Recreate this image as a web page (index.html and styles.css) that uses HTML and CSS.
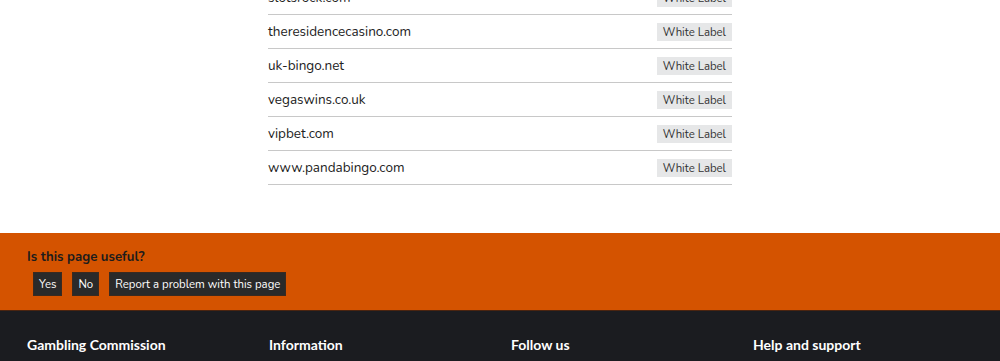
FILE: index.html
```html
<!DOCTYPE html>
<html lang="en">
<head>
    <meta charset="UTF-8">
    <meta name="viewport" content="width=device-width, initial-scale=1.0">
    <title>Operators</title>
    <link rel="stylesheet" href="styles.css">
</head>
<body>
    <main class="content">
        <ul class="site-list">
            <li class="site-row"><span class="site-name">slotsrock.com</span><span class="tag">White Label</span></li>
            <li class="site-row"><span class="site-name">theresidencecasino.com</span><span class="tag">White Label</span></li>
            <li class="site-row"><span class="site-name">uk-bingo.net</span><span class="tag">White Label</span></li>
            <li class="site-row"><span class="site-name">vegaswins.co.uk</span><span class="tag">White Label</span></li>
            <li class="site-row"><span class="site-name">vipbet.com</span><span class="tag">White Label</span></li>
            <li class="site-row"><span class="site-name">www.pandabingo.com</span><span class="tag">White Label</span></li>
        </ul>
    </main>

    <section class="feedback">
        <h2>Is this page useful?</h2>
        <div class="feedback-buttons">
            <button class="fb-button">Yes</button>
            <button class="fb-button">No</button>
            <button class="fb-button">Report a problem with this page</button>
        </div>
    </section>

    <footer class="site-footer">
        <div class="footer-col"><h3>Gambling Commission</h3></div>
        <div class="footer-col"><h3>Information</h3></div>
        <div class="footer-col"><h3>Follow us</h3></div>
        <div class="footer-col"><h3>Help and support</h3></div>
    </footer>
</body>
</html>
```

FILE: styles.css
```css
body {
    margin: 0;
    font-family: Nunito, Lato, "Open Sans", sans-serif;
    background-color: white;
    color: #222;
    overflow: hidden;
}

.content {
    width: 464px;
    margin: -19px auto 0;
    padding-bottom: 48px;
}

.site-list {
    list-style: none;
    margin: 0;
    padding: 0;
}

.site-row {
    display: flex;
    justify-content: space-between;
    align-items: center;
    height: 33px;
    border-bottom: 1px solid #c8c8c8;
    font-size: 13.5px;
}

.site-name {
    color: #222;
}

.tag {
    background-color: #e6e7e8;
    color: #333;
    font-size: 11.4px;
    line-height: 18px;
    padding: 0 6px;
}

.feedback {
    background-color: #d45300;
    padding: 15px 27px 13px;
    height: 49px;
    border-bottom: 1px solid #4a2410;
}

.feedback h2 {
    margin: 0 0 6px;
    font-size: 13.2px;
    font-weight: 700;
    color: #1c1c1c;
    line-height: 18px;
}

.feedback-buttons {
    display: flex;
    gap: 10px;
    margin-left: 6px;
}

.fb-button {
    font-family: inherit;
    font-size: 11.4px;
    color: white;
    background-color: #2a2a2a;
    border: 1px solid #3a2a20;
    height: 24px;
    padding: 0 5px;
    cursor: pointer;
}

.site-footer {
    background-color: #1b1c20;
    display: grid;
    grid-template-columns: repeat(4, 242px);
    padding: 25px 27px 40px;
}

.footer-col h3 {
    margin: 0;
    font-family: Lato, sans-serif;
    font-size: 14px;
    font-weight: 700;
    color: white;
    line-height: 18px;
}
```
